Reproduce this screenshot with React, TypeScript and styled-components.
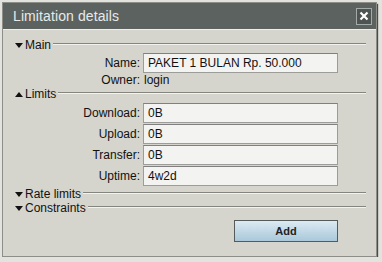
import styled, { createGlobalStyle } from "styled-components";

interface Field {
  label: string;
  value: string;
}

const GlobalStyle = createGlobalStyle`
  html, body {
    margin: 0;
    padding: 0;
    background: #e2e2de;
    font-family: "Liberation Sans", Arial, sans-serif;
  }
`;

const Window = styled.div`
  margin: 2px 0 0 2px;
  width: 373px;
  height: 253px;
  border: 1px solid #8e8e88;
  background: #d5d5cd;
  box-shadow: 1px 2px 1px #4a4a48;
  display: flex;
  flex-direction: column;
`;

const TitleBar = styled.div`
  height: 26px;
  background: #5c6260;
  display: flex;
  align-items: center;
  justify-content: space-between;
  padding: 0 4px 0 10px;
`;

const Title = styled.span`
  color: #e6eaea;
  font-size: 14px;
  letter-spacing: 0.1px;
`;

const CloseButton = styled.div`
  width: 14px;
  height: 15px;
  border: 1px solid #a4aaa8;
  background: #4e5452;
  display: flex;
  align-items: center;
  justify-content: center;
`;

const Body = styled.div`
  flex: 1;
  border-top: 1px solid #eeeeea;
  padding: 8px 10px 0 12px;
  display: flex;
  flex-direction: column;
`;

const SectionHeader = styled.div<{ top?: number }>`
  height: 14px;
  margin-top: ${(props) => props.top ?? 0}px;
  display: flex;
  align-items: center;
  font-size: 12px;
  color: #111;
`;

const Arrow = styled.span<{ open: boolean }>`
  width: 0;
  height: 0;
  margin-right: 2px;
  border-left: 4px solid transparent;
  border-right: 4px solid transparent;
  ${(props) => (props.open ? "border-top: 5px solid #111;" : "border-bottom: 5px solid #111;")}
`;

const Rule = styled.div`
  flex: 1;
  margin: -3px 0 0 2px;
  border-top: 1px solid #85857f;
  border-bottom: 1px solid #f2f2ee;
`;

const Fields = styled.div<{ top: number; gap: number }>`
  display: grid;
  grid-template-columns: 134px 195px;
  column-gap: 3px;
  row-gap: ${(props) => props.gap}px;
  margin: ${(props) => props.top}px 0 0 -9px;
  font-size: 12px;
  color: #111;
`;

const Label = styled.div`
  text-align: right;
  align-self: center;
`;

const Input = styled.div`
  height: 18px;
  line-height: 18px;
  padding: 0 4px;
  background: #f3f3f2;
  border: 1px solid #9c9c98;
  border-top-color: #808080;
  white-space: nowrap;
`;

const Value = styled.div`
  height: 13px;
  line-height: 14px;
  padding-left: 1px;
`;

const Footer = styled.div`
  display: flex;
  justify-content: flex-end;
  padding: 5px 28px 0 0;
`;

const AddButton = styled.div`
  width: 102px;
  height: 20px;
  border: 1px solid #555a5a;
  background: linear-gradient(#dceaf2, #a9c8da);
  display: flex;
  align-items: center;
  justify-content: center;
  font-size: 11px;
  font-weight: bold;
  color: #222;
`;

const limits: Field[] = [
  { label: "Download:", value: "0B" },
  { label: "Upload:", value: "0B" },
  { label: "Transfer:", value: "0B" },
  { label: "Uptime:", value: "4w2d" },
];

const App = () => {
  return (
    <>
      <GlobalStyle />
      <Window>
        <TitleBar>
          <Title>Limitation details</Title>
          <CloseButton>
            <svg width="10" height="10" viewBox="0 0 10 10">
              <path d="M1.5 1.5 L8.5 8.5 M8.5 1.5 L1.5 8.5" stroke="#fff" strokeWidth="2.2" />
            </svg>
          </CloseButton>
        </TitleBar>
        <Body>
          <SectionHeader>
            <Arrow open />
            Main
            <Rule />
          </SectionHeader>
          <Fields top={1} gap={0}>
            <Label>Name:</Label>
            <Input>PAKET 1 BULAN Rp. 50.000</Input>
            <Label>Owner:</Label>
            <Value>login</Value>
          </Fields>
          <SectionHeader>
            <Arrow open={false} />
            Limits
            <Rule />
          </SectionHeader>
          <Fields top={2} gap={1}>
            {limits.map((field: Field) => (
              <>
                <Label key={field.label + "l"}>{field.label}</Label>
                <Input key={field.label + "v"}>{field.value}</Input>
              </>
            ))}
          </Fields>
          <SectionHeader top={1}>
            <Arrow open />
            Rate limits
            <Rule />
          </SectionHeader>
          <SectionHeader>
            <Arrow open />
            Constraints
            <Rule />
          </SectionHeader>
          <Footer>
            <AddButton>Add</AddButton>
          </Footer>
        </Body>
      </Window>
    </>
  );
};

export default App;
